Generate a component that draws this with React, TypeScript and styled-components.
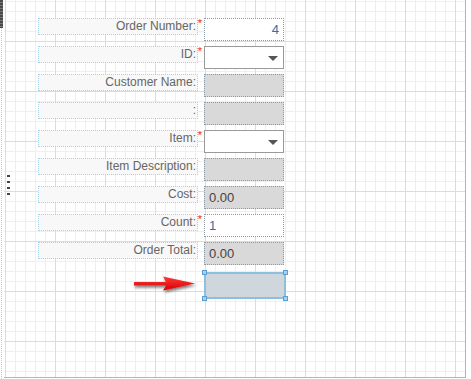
import React from "react";
import styled, { createGlobalStyle } from "styled-components";

const GlobalStyle = createGlobalStyle`
  html, body {
    margin: 0;
    padding: 0;
    background: #ffffff;
  }
  body {
    font-family: "Liberation Sans", Arial, sans-serif;
  }
`;

const Page = styled.div`
  display: flex;
  width: 471px;
  height: 379px;
  overflow: hidden;
`;

const Gutter = styled.div`
  width: 4px;
  display: flex;
  flex-direction: column;
`;

const GutterBar = styled.div`
  width: 3px;
  height: 28px;
  background: repeating-linear-gradient(
    to bottom,
    #4a4a4a 0 2px,
    #777 2px 3px
  );
`;

const GutterLine = styled.div`
  flex: 1;
  width: 1px;
  margin-left: 1px;
  border-left: 1px dotted #a6cfe0;
`;

const Canvas = styled.div`
  position: relative;
  width: 461px;
  height: 377px;
  border-right: 1px solid #f09a9a;
  border-bottom: 1px solid #f09a9a;
  background-color: #ffffff;
  background-image: linear-gradient(to right, #dcdcdc 1px, transparent 1px),
    linear-gradient(to bottom, #dcdcdc 1px, transparent 1px),
    linear-gradient(to right, #efefef 1px, transparent 1px),
    linear-gradient(to bottom, #efefef 1px, transparent 1px);
  background-size: 50px 50px, 50px 50px, 10px 10px, 10px 10px;
  background-position: 1px 41px, 1px 41px, 1px 1px, 1px 1px;
`;

const Handle = styled.div`
  position: absolute;
  left: 3px;
  top: 175px;
  display: flex;
  flex-direction: column;
  gap: 4px;

  span {
    display: block;
    width: 3px;
    height: 2px;
    background: #444;
  }
`;

const Form = styled.div`
  display: flex;
  flex-direction: column;
  gap: 5px;
  padding: 18px 0 0 34px;
`;

const Row = styled.div`
  display: flex;
  align-items: flex-start;
  gap: 6px;
`;

const Label = styled.div`
  position: relative;
  box-sizing: border-box;
  width: 160px;
  height: 17px;
  padding-right: 1px;
  border: 1px dotted #a9d3e4;
  background: #f8f8f8;
  color: #666666;
  font-size: 12px;
  line-height: 15px;
  text-align: right;
  white-space: nowrap;
`;

const Required = styled.span`
  position: absolute;
  right: -5px;
  top: -1px;
  color: #e8262a;
  font-size: 11px;
  line-height: 11px;
`;

const Field = styled.div<{ $kind: "text" | "select" | "readonly"; $align?: "left" | "right" }>`
  position: relative;
  box-sizing: border-box;
  width: 80px;
  height: 23px;
  padding: 0 4px;
  border: 1px ${(p) => (p.$kind === "select" ? "solid #9a9a9a" : "dotted #8b9ca8")};
  background: ${(p) => (p.$kind === "readonly" ? "#d9d9d9" : "#ffffff")};
  color: ${(p) => (p.$kind === "readonly" ? "#444444" : "#2f6ea8")};
  font-size: 13px;
  line-height: 21px;
  text-align: ${(p) => p.$align ?? "left"};
`;

const Caret = styled.span`
  position: absolute;
  right: 5px;
  top: 9px;
  width: 0;
  height: 0;
  border-left: 5px solid transparent;
  border-right: 5px solid transparent;
  border-top: 5px solid #555555;
`;

const ArrowSlot = styled.div`
  width: 160px;
  height: 27px;
  display: flex;
  justify-content: flex-end;
  align-items: center;
`;

const Selected = styled.div`
  position: relative;
  box-sizing: border-box;
  width: 82px;
  height: 27px;
  margin-top: 2px;
  border: 2px solid #8cc0e0;
  background: #cfd6dc;
`;

const Corner = styled.span<{ $x: "l" | "r"; $y: "t" | "b" }>`
  position: absolute;
  width: 5px;
  height: 5px;
  box-sizing: border-box;
  border: 1px solid #5b9fd2;
  background: #a8d0ec;
  ${(p) => (p.$x === "l" ? "left: -4px;" : "right: -4px;")}
  ${(p) => (p.$y === "t" ? "top: -4px;" : "bottom: -4px;")}
`;

type Item = {
  label: string;
  required?: boolean;
  kind: "text" | "select" | "readonly";
  value?: string;
  align?: "left" | "right";
};

const items: Item[] = [
  { label: "Order Number:", required: true, kind: "text", value: "4", align: "right" },
  { label: "ID:", required: true, kind: "select" },
  { label: "Customer Name:", kind: "readonly" },
  { label: ":", kind: "readonly" },
  { label: "Item:", required: true, kind: "select" },
  { label: "Item Description:", kind: "readonly" },
  { label: "Cost:", kind: "readonly", value: "0.00" },
  { label: "Count:", required: true, kind: "text", value: "1" },
  { label: "Order Total:", kind: "readonly", value: "0.00" },
];

function RedArrow() {
  return (
    <svg width="66" height="24" viewBox="0 0 66 24">
      <defs>
        <filter id="shadow" x="-20%" y="-50%" width="140%" height="200%">
          <feGaussianBlur in="SourceAlpha" stdDeviation="1.6" />
          <feOffset dx="1" dy="2" result="b" />
          <feComponentTransfer>
            <feFuncA type="linear" slope="0.55" />
          </feComponentTransfer>
          <feMerge>
            <feMergeNode />
            <feMergeNode in="SourceGraphic" />
          </feMerge>
        </filter>
        <linearGradient id="red" x1="0" y1="0" x2="0" y2="1">
          <stop offset="0" stopColor="#ff3b3b" />
          <stop offset="1" stopColor="#d90000" />
        </linearGradient>
      </defs>
      <path
        d="M2 10 L34 10 L31 4.5 L63 11.5 L31 18.5 L34 13.5 L2 13.5 Z"
        fill="url(#red)"
        filter="url(#shadow)"
      />
    </svg>
  );
}

export default function App() {
  return (
    <>
      <GlobalStyle />
      <Page>
        <Gutter>
          <GutterBar />
          <GutterLine />
        </Gutter>
        <Canvas>
          <Handle>
            <span />
            <span />
            <span />
            <span />
          </Handle>
          <Form>
            {items.map((it, i) => (
              <Row key={i}>
                <Label>
                  {it.label}
                  {it.required && <Required>*</Required>}
                </Label>
                <Field $kind={it.kind} $align={it.align}>
                  {it.value}
                  {it.kind === "select" && <Caret />}
                </Field>
              </Row>
            ))}
            <Row>
              <ArrowSlot>
                <RedArrow />
              </ArrowSlot>
              <Selected>
                <Corner $x="l" $y="t" />
                <Corner $x="r" $y="t" />
                <Corner $x="l" $y="b" />
                <Corner $x="r" $y="b" />
              </Selected>
            </Row>
          </Form>
        </Canvas>
      </Page>
    </>
  );
}
